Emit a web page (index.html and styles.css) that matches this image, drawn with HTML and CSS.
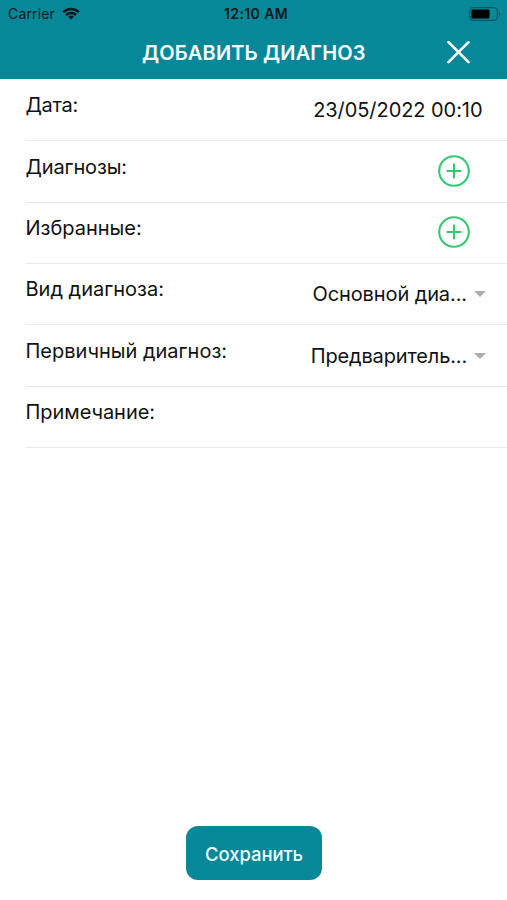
FILE: index.html
```html
<!DOCTYPE html>
<html lang="ru">
<head>
<meta charset="utf-8">
<title>Добавить диагноз</title>
<link rel="stylesheet" href="styles.css">
</head>
<body>
<div class="screen">
  <header class="header">
    <div class="status">
      <div class="network">
        <span class="carrier">Carrier</span>
        <svg class="wifi" width="18" height="13" viewBox="0 0 18 13" fill="none" stroke="#06191c" stroke-width="2.5">
          <path d="M1.2 5.1C5.5.9 12.5.9 16.8 5.1"/>
          <path d="M4 8C6.8 5.4 11.2 5.4 14 8"/>
          <path d="M6.1 9.7Q9 7.4 11.9 9.7L9 12.6Z" fill="#06191c" stroke="none"/>
        </svg>
      </div>
      <span class="clock">12:10 AM</span>
      <svg class="battery" width="32" height="14" viewBox="0 0 32 14">
        <rect x=".7" y=".7" width="27.6" height="12.6" rx="3.6" fill="none" stroke="#075762" stroke-width="1.2"/>
        <rect x="2.4" y="2.4" width="18.2" height="9.2" rx="1.6" fill="#000"/>
        <path d="M29.8 4.7Q31.4 5.3 31.4 7T29.8 9.3Z" fill="#075762"/>
      </svg>
    </div>
    <div class="bar">
      <h1 class="title">ДОБАВИТЬ ДИАГНОЗ</h1>
      <svg class="close" width="24" height="24" viewBox="0 0 24 24" fill="none" stroke="#fff" stroke-width="2.6" stroke-linecap="round"><path d="M1.5 1.2L21.5 21.2M21.5 1.2L1.5 21.2"/></svg>
    </div>
  </header>
  <main class="form">
    <div class="row"><span class="label l-date">Дата:</span><span class="value v-date">23/05/2022 00:10</span></div>
    <div class="row"><span class="label l-diags">Диагнозы:</span>
      <svg class="plus" width="32" height="32" viewBox="0 0 32 32" fill="none" stroke="#35c871" stroke-width="2.1" stroke-linecap="round"><circle cx="16" cy="16" r="14.8"/><path d="M9.4 16H22.6M16 9.4V22.6"/></svg></div>
    <div class="row"><span class="label l-fav">Избранные:</span>
      <svg class="plus" width="32" height="32" viewBox="0 0 32 32" fill="none" stroke="#35c871" stroke-width="2.1" stroke-linecap="round"><circle cx="16" cy="16" r="14.8"/><path d="M9.4 16H22.6M16 9.4V22.6"/></svg></div>
    <div class="row"><span class="label l-kind">Вид диагноза:</span><span class="value select v-kind">Основной диа...</span><i class="caret"></i></div>
    <div class="row"><span class="label l-prim">Первичный диагноз:</span><span class="value select v-prim">Предваритель...</span><i class="caret"></i></div>
    <div class="row"><span class="label l-note">Примечание:</span></div>
  </main>
  <footer class="footer"><button class="save"><span>Сохранить</span></button></footer>
</div>
</body>
</html>
```

FILE: styles.css
```css
* { box-sizing: border-box; }
body { margin: 0; background: #fff; font-family: Inter, "Liberation Sans", sans-serif; color: #111; }
.screen { height: 900px; display: flex; flex-direction: column; }
.header { height: 79px; flex: none; background: #078898; }
.status { height: 27px; padding: 0 6px 0 8px; display: grid; grid-template-columns: 1fr auto 1fr; align-items: center; color: #06191c; }
.network { display: flex; align-items: center; gap: 7px; }
.carrier { font-size: 14px; letter-spacing: .15px; }
.clock { margin-left: 3px; font-size: 14px; font-weight: 600; letter-spacing: .6px; letter-spacing: .4px; }
.battery { justify-self: end; }
.bar { height: 50px; padding: 1px 36px 0 142px; display: flex; align-items: center; justify-content: space-between; }
.title { margin: 0; font-size: 20px; line-height: 24px; font-weight: 600; letter-spacing: .16px; color: #fff; white-space: nowrap; }
.form { margin: .8px 0 0 26px; }
.row { height: 61.4px; border-bottom: 1px solid #e9e9e9; display: flex; align-items: flex-start; padding-top: 13.5px; white-space: nowrap; }
.label { margin-left: -.5px; font-size: 20px; line-height: 24px; }
.l-date { letter-spacing: -.3px; }
.l-diags { letter-spacing: -.15px; }
.l-note { letter-spacing: -.05px; }
.value { margin: 5px 24.5px 0 auto; font-size: 20px; line-height: 24px; letter-spacing: -.06px; }
.select { margin-right: 7px; letter-spacing: -.15px; }
.v-kind { letter-spacing: -.1px; }
.caret { margin: 14px 21px 0 0; border: 6px solid transparent; border-top: 6.5px solid #adadad; border-bottom: 0; }
.plus { margin: .2px 36.7px 0 auto; }
.footer { margin-top: auto; height: 74px; display: flex; justify-content: center; align-items: flex-start; }
.save { width: 136px; height: 54px; margin-left: 1px; padding: 1px 0 0; border: 0; border-radius: 12px; background: #078898; color: #e9fdff; font: 500 18.5px/24px Inter, "Liberation Sans", sans-serif; letter-spacing: -.08px; }
```
